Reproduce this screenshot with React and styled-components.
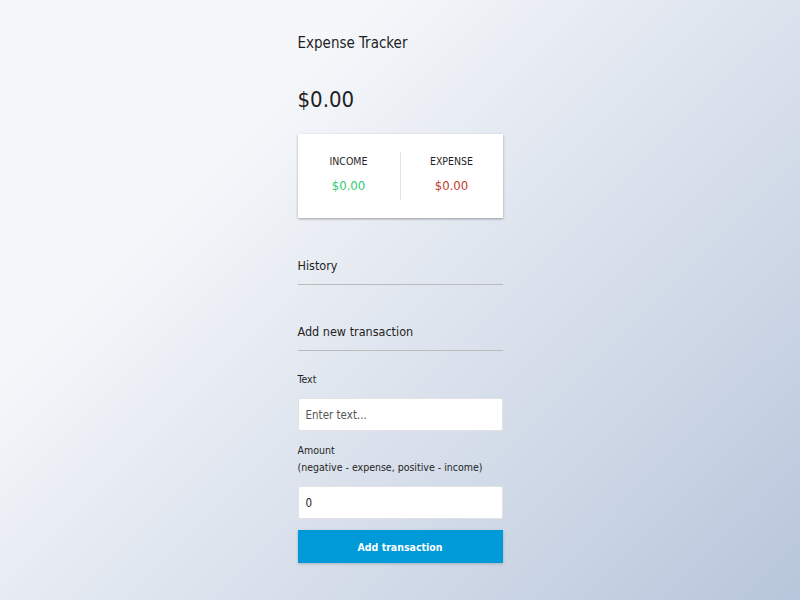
import React, { useState } from 'react';
import styled, { createGlobalStyle } from 'styled-components';

const GlobalStyle = createGlobalStyle`
  * {
    box-sizing: border-box;
  }
  body {
    margin: 0;
    min-height: 100vh;
    font-family: "DejaVu Sans", "Liberation Sans", sans-serif;
    font-stretch: condensed;
    color: #1f1f1f;
    background-image: linear-gradient(315deg, #b8c6db 0%, #f5f7fa 74%);
    background-attachment: fixed;
  }
`;

const Page = styled.div`
  display: flex;
  justify-content: center;
  min-height: 100vh;
`;

const Container = styled.div`
  width: 205px;
  padding-top: 32px;
`;

const Title = styled.h2`
  margin: 0;
  font-size: 15px;
  font-weight: 400;
  line-height: 22px;
`;

const Balance = styled.h1`
  margin: 31px 0 0;
  font-size: 22px;
  font-weight: 400;
  line-height: 30px;
`;

const SummaryCard = styled.div`
  display: flex;
  margin-top: 19px;
  padding: 18px 0;
  background: #fff;
  box-shadow: 0 1px 3px rgba(0, 0, 0, 0.12), 0 1px 2px rgba(0, 0, 0, 0.24);
`;

const SummaryCol = styled.div`
  flex: 1;
  text-align: center;
  & + & {
    border-left: 1px solid #e4e4e4;
  }
`;

const SummaryLabel = styled.h4`
  margin: 0;
  font-size: 10.5px;
  font-weight: 400;
  line-height: 18px;
  text-transform: uppercase;
`;

const SummaryValue = styled.p`
  margin: 5px 0 3px;
  font-size: 13px;
  line-height: 22px;
  color: ${(p) => (p.$type === 'plus' ? '#2ecc71' : '#c0392b')};
`;

const SectionTitle = styled.h3`
  margin: ${(p) => p.$top}px 0 0;
  padding-bottom: 8px;
  font-size: 12.5px;
  font-weight: 400;
  line-height: 20px;
  border-bottom: 1px solid #bbb;
`;

const List = styled.ul`
  list-style: none;
  margin: 0;
  padding: 0;
`;

const Form = styled.form`
  margin-top: 20px;
`;

const Field = styled.div`
  margin-bottom: 11px;
`;

const Label = styled.label`
  display: block;
  font-size: 10.5px;
  line-height: 17px;
  margin-bottom: 10px;
`;

const Input = styled.input`
  display: block;
  width: 100%;
  height: 33px;
  border: 1px solid #e2e2e2;
  border-radius: 2px;
  padding: 0 7px;
  font-family: inherit;
  font-stretch: condensed;
  font-size: 11.5px;
  color: #222;
  background: #fff;
  outline: none;
  &::placeholder {
    color: #555;
  }
`;

const Button = styled.button`
  display: block;
  width: 100%;
  height: 33px;
  border: 0;
  background: #009ad8;
  color: #fff;
  font-family: inherit;
  font-stretch: condensed;
  font-size: 10.5px;
  font-weight: 700;
  box-shadow: 0 1px 3px rgba(0, 0, 0, 0.2);
  cursor: pointer;
`;

export default function App() {
  const [text, setText] = useState('');
  const [amount, setAmount] = useState(0);

  return (
    <>
      <GlobalStyle />
      <Page>
        <Container>
          <Title>Expense Tracker</Title>
          <Balance>$0.00</Balance>

          <SummaryCard>
            <SummaryCol>
              <SummaryLabel>Income</SummaryLabel>
              <SummaryValue $type="plus">$0.00</SummaryValue>
            </SummaryCol>
            <SummaryCol>
              <SummaryLabel>Expense</SummaryLabel>
              <SummaryValue $type="minus">$0.00</SummaryValue>
            </SummaryCol>
          </SummaryCard>

          <SectionTitle $top={38}>History</SectionTitle>
          <List />

          <SectionTitle $top={37}>Add new transaction</SectionTitle>
          <Form onSubmit={(e) => e.preventDefault()}>
            <Field>
              <Label htmlFor="text">Text</Label>
              <Input
                id="text"
                type="text"
                placeholder="Enter text..."
                value={text}
                onChange={(e) => setText(e.target.value)}
              />
            </Field>
            <Field>
              <Label htmlFor="amount">
                Amount
                <br />
                (negative - expense, positive - income)
              </Label>
              <Input
                id="amount"
                type="number"
                placeholder="Enter amount..."
                value={amount}
                onChange={(e) => setAmount(e.target.value)}
              />
            </Field>
            <Button type="submit">Add transaction</Button>
          </Form>
        </Container>
      </Page>
    </>
  );
}
